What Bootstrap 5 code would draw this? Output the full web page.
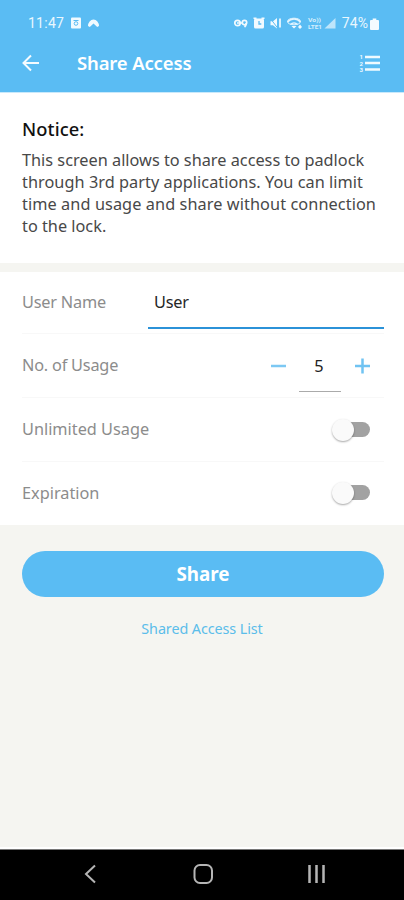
<!DOCTYPE html>
<html lang="en">
<head>
<meta charset="utf-8">
<meta name="viewport" content="width=device-width, initial-scale=1">
<title>Share Access</title>
<link href="https://cdn.jsdelivr.net/npm/bootstrap@5.3.0/dist/css/bootstrap.min.css" rel="stylesheet">
<style>
body{font-family:"Noto Sans","Open Sans",sans-serif;background:#f5f5f1;height:900px;overflow:hidden}
svg{display:block;flex:none}
.topbar{background:#5abcf3;height:93px;border-bottom:1px solid #c9e9fb}
.status{height:46px;padding:0 25px 0 28px;font-family:Roboto,sans-serif;font-size:14px;color:#e9f7fe}
.status .clock{letter-spacing:.25px}
.status .percent{margin-left:5px;letter-spacing:.1px}
.appbar{height:34px;padding:0 23px 0 22px}
.appbar h1{font-size:18.5px;font-weight:600;letter-spacing:-.15px;margin-left:37px}
.notice{height:170px;padding:24px 22px 0}
.notice h2{font-size:18.3px;line-height:24px;font-weight:500;color:#111;margin-bottom:8px;letter-spacing:.1px}
.notice p{font-size:16.3px;line-height:22px;color:#484848}
.notice p span{display:block;white-space:nowrap}
.notice .l1{letter-spacing:0}
.notice .l2{letter-spacing:.04px}
.notice .l3{letter-spacing:.08px}
.settings{margin-top:9px;height:253px;padding:0 20px 0 22px}
.setting{height:64px;border-bottom:1px solid #f8f8f8;font-size:16.3px;color:#8c8c8c}
.setting:first-child{height:62px}
.setting:last-child{border:0;height:62px}
.tight{letter-spacing:-.2px}
.field{width:236px;height:57px;border:0;border-bottom:2px solid #2b92d8;border-radius:0;padding:4px 6px 0;font-size:16.3px;letter-spacing:-.2px;color:#262626;background:none;outline:0}
.count{width:42px;height:57px;border:0;border-bottom:1px solid #aaa;padding:5px 2px 0 0;margin:1px 14px 0 13px;text-align:center;font-size:16.3px;color:#222;background:none}
.step{border:0;background:none;padding:0}
.step-up{margin-right:14px}
.switch{width:38px;height:24px;margin-right:14px}
.switch .track{position:absolute;left:10px;top:4px;width:28px;height:15px;border-radius:8px;background:#a2a2a2}
.switch .thumb{position:absolute;left:0;top:1px;width:22px;height:22px;border-radius:50%;background:#fafafa;box-shadow:0 1px 2px rgba(0,0,0,.35)}
.actions{padding:26px 20px 0 22px}
.share{height:46px;background:#5abcf3;font-size:18.8px;font-weight:700;line-height:1}
.shared-link{font-size:14.4px;line-height:20px;margin-top:22px;margin-right:2px;letter-spacing:-.1px;color:#5bbdea}
.sysnav{height:51px;background:#000;border-top:1px solid #777;box-shadow:0 -2px #fff}
</style>
<script src="https://cdn.jsdelivr.net/npm/bootstrap@5.3.0/dist/js/bootstrap.bundle.min.js"></script>
</head>
<body class="d-flex flex-column">
<header class="topbar text-white">
  <div class="status d-flex align-items-center">
    <span class="clock">11:47</span>
    <svg width="30" height="14" viewBox="0 0 30 14" style="margin-left:7px"><rect x="0" y="1.500" width="10" height="11" rx="1" fill="#f1faff"/><path d="M2.500 4.500h5" stroke="#5abcf3"/><circle cx="5" cy="7.500" r="1.800" fill="none" stroke="#5abcf3"/><path d="M17 10a5.500 6.500 0 0 1 11 0l-1.800 1-3.700-3.600-3.700 3.600z" fill="#f1faff"/></svg>
    <svg class="ms-auto" width="104" height="16" viewBox="0 0 104 16" fill="#f1faff">
      <g fill="none" stroke="#f1faff" stroke-width="1.700"><circle cx="4.500" cy="8" r="2.700"/><circle cx="11.500" cy="7.600" r="2.200"/><path d="M4 8h6M13.200 8c0 2-.4 3-1.700 4"/></g>
      <rect x="21" y="3.500" width="10" height="10" rx="1.500"/><path d="M20.500 3.200h3M28.500 3.200h3" stroke="#f1faff" stroke-width="1.500"/><path d="M26 6V9l2.300 0" stroke="#5abcf3" stroke-width="1.300" fill="none"/>
      <path d="M37.500 6.300h2.600L44 3v10.500l-4-3.300h-2.500z"/><path d="M37 3l8 10.500" stroke="#5abcf3"/><path d="M47 3.500v9" stroke="#f1faff" stroke-width="1.700"/>
      <g fill="none" stroke="#e7f6ff" stroke-width="1.400"><path d="M54.500 7c3.600-4 9.500-4 13 0M57.500 9.500c2-2 5-2 7 0"/><ellipse cx="61" cy="6.500" rx="6.500" ry="3.300" stroke-width="1"/></g><path d="M58.500 11h5L61 13.500zM65 12l2-2.500 2 2.500-2 2z"/>
      <g font-family="Roboto,sans-serif" font-size="5.500" font-weight="700" fill="#d5effd"><text x="75" y="7" textLength="13" lengthAdjust="spacingAndGlyphs">Vo))</text><text x="75" y="13.800" textLength="14" lengthAdjust="spacingAndGlyphs">LTE1</text></g>
      <path d="M91.500 13.500L102.500 3v10.500z" fill="#bee5fb"/>
    </svg>
    <span class="percent">74%</span>
    <svg width="9" height="13" viewBox="0 0 9 13" style="margin-left:2px"><path d="M2.700 1.500h3.600v1.500H8q1 0 1 1V12q0 1-1 1H1q-1 0-1-1V4q0-1 1-1h1.700z" fill="#f4fbff"/></svg>
  </div>
  <div class="appbar d-flex align-items-center">
    <svg width="18" height="18" viewBox="0 0 18 18" fill="none" stroke="#f4fbff" stroke-width="2"><path d="M17 9H2M9 1.500L1.500 9 9 16.500"/></svg>
    <h1 class="mb-0">Share Access</h1>
    <svg class="ms-auto" width="22" height="20" viewBox="0 0 22 20"><path d="M6 4h15M6 10h15M6 16.500h15" stroke="#effaff" stroke-width="2.500"/><g font-family="Roboto,sans-serif" font-size="6" font-weight="700" fill="#effaff"><text x="0.500" y="6">1</text><text x="0.500" y="12.500">2</text><text x="0.500" y="19">3</text></g></svg>
  </div>
</header>
<section class="notice bg-white">
  <h2>Notice:</h2>
  <p class="mb-0"><span class="l1">This screen allows to share access to padlock</span><span class="l2">through 3rd party applications. You can limit</span><span class="l3">time and usage and share without connection</span><span>to the lock.</span></p>
</section>
<section class="settings bg-white">
  <div class="setting d-flex justify-content-between"><label for="user" class="align-self-center tight">User Name</label><input id="user" class="field" value="User"></div>
  <div class="setting d-flex align-items-center"><label for="uses" class="me-auto tight">No. of Usage</label>
    <button class="step" aria-label="Decrease"><svg width="15" height="16"><path d="M0 8h15" stroke="#7cc8f3" stroke-width="2.500"/></svg></button>
    <input id="uses" class="count align-self-start" value="5">
    <button class="step step-up" aria-label="Increase"><svg width="15" height="16"><path d="M0 8h15M7.500 .5v15" stroke="#70c3f2" stroke-width="2.500"/></svg></button>
  </div>
  <div class="setting d-flex align-items-center justify-content-between"><span>Unlimited Usage</span><div class="switch position-relative" role="switch" aria-checked="false"><span class="track"></span><span class="thumb"></span></div></div>
  <div class="setting d-flex align-items-center justify-content-between"><span>Expiration</span><div class="switch position-relative" role="switch" aria-checked="false"><span class="track"></span><span class="thumb"></span></div></div>
</section>
<main class="actions d-flex flex-column align-items-center">
  <button class="share btn rounded-pill w-100 text-white">Share</button>
  <a class="shared-link text-decoration-none" href="#">Shared Access List</a>
</main>
<nav class="sysnav mt-auto">
  <svg width="404" height="50" viewBox="0 0 404 50" fill="none" stroke="#b5b5b5" stroke-width="2"><path d="M95 15.500L86 24l9 8.500"/><rect x="194.500" y="15" width="17.500" height="18" rx="5.500"/><path d="M309.500 15v18M316.500 15v18M323.500 15v18" stroke-width="2.500"/></svg>
</nav>
</body>
</html>
